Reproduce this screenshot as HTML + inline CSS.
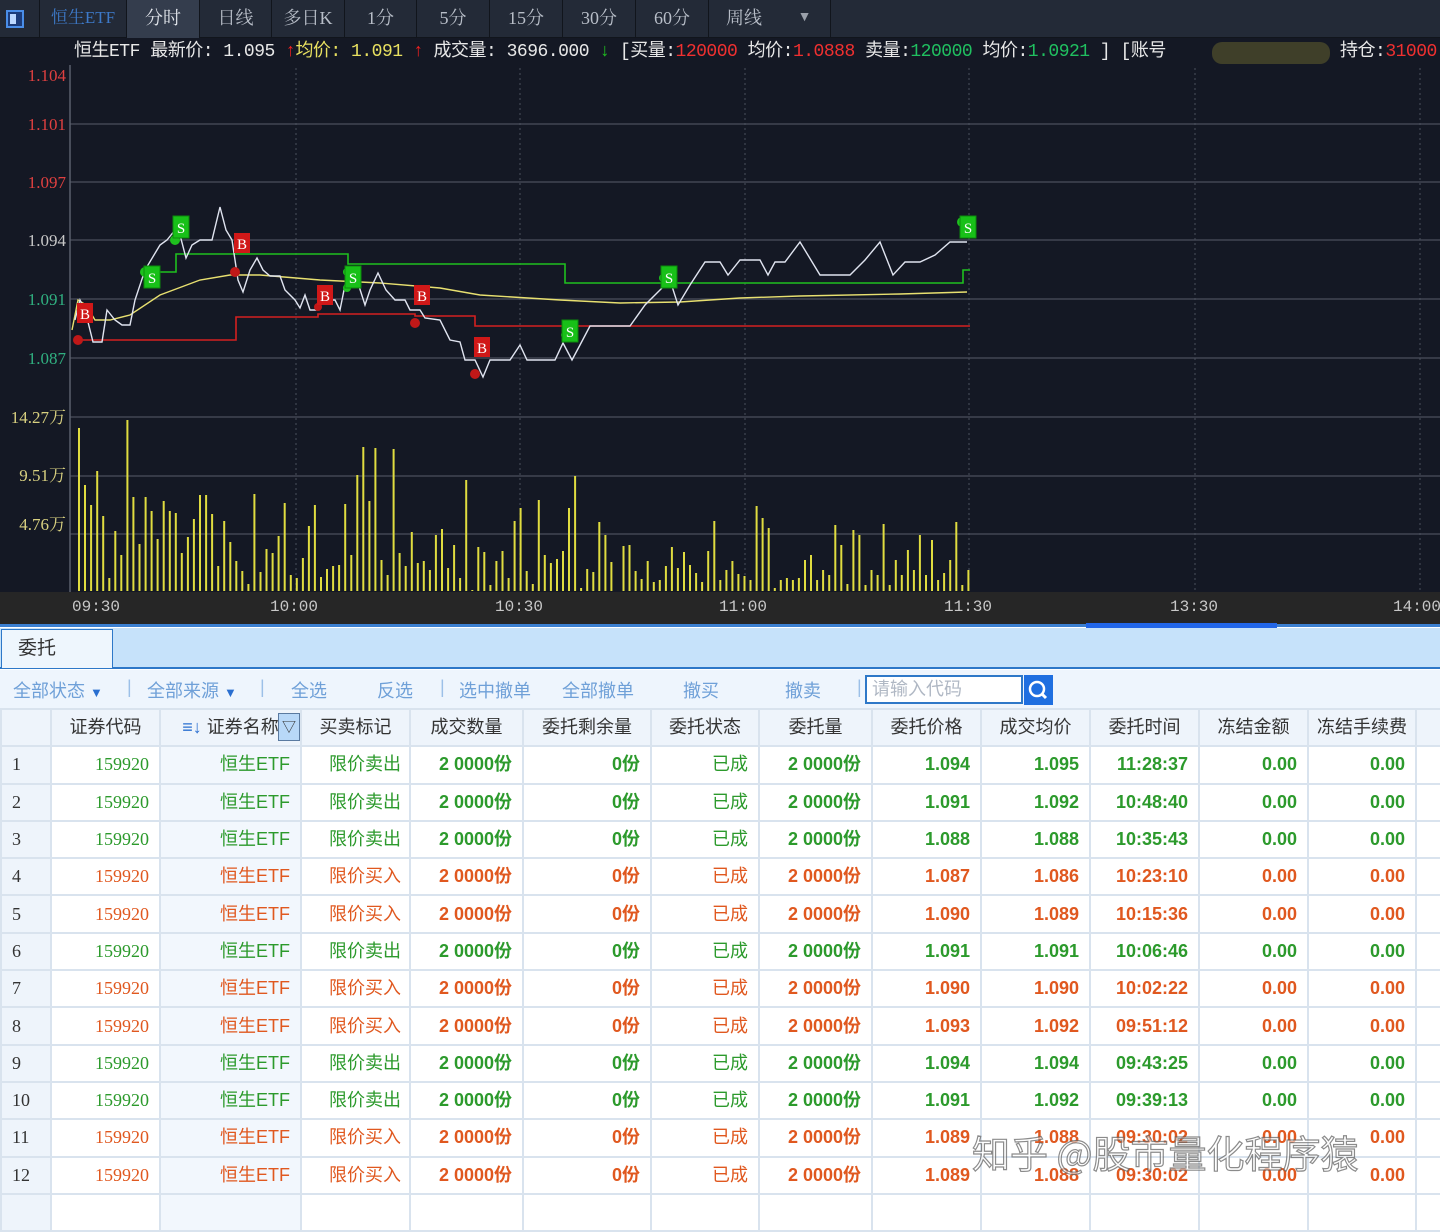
<!DOCTYPE html>
<html><head><meta charset="utf-8"><style>
*{margin:0;padding:0;box-sizing:border-box}
body{width:1440px;height:1209px;overflow:hidden;background:#fff;font-family:"Liberation Sans","Noto Sans CJK SC",sans-serif;position:relative}
.top{position:absolute;left:0;top:0;width:1440px;height:38px;background:#232a37;border-bottom:1px solid #11151c}
.tab{position:absolute;top:0;height:38px;line-height:36px;color:#b8bec8;font-size:18px;text-align:center;border-right:1px solid #11151c;font-family:"Liberation Serif","Noto Serif CJK SC",serif}
.info{position:absolute;left:0;top:38px;width:1440px;height:27px;background:#141824;font-family:"Liberation Mono","Noto Sans CJK SC",monospace;font-size:18px;line-height:28px;white-space:nowrap;color:#e8e8e8;letter-spacing:-0.5px}
.axis{position:absolute;left:0;top:592px;width:1440px;height:35px;background:#262626;border-bottom:3px solid #3b7fd0}
.axis span{position:absolute;top:6px;color:#c8c8c8;font-size:16px;font-family:"Liberation Mono",monospace}
.strip{position:absolute;left:0;top:628px;width:1440px;height:41px;background:#c6e2fa;border-bottom:2px solid #2e78c8}
.wt{position:absolute;left:1px;top:1px;width:112px;height:39px;background:#eef6fd;border:1px solid #2e78c8;border-bottom:none;font-size:19px;color:#333;padding-left:16px;line-height:38px}
.tb{position:absolute;left:0;top:670px;width:1440px;height:39px;background:#eef5fd;font-size:18px;color:#6fa0d8}
.tb span{position:absolute;top:7px}
table{position:absolute;left:0;top:708px;border-collapse:collapse;table-layout:fixed;width:1436px}
td,th{border:2px solid #d9e3ee;height:37.3px;padding-top:0;padding-bottom:0;line-height:33px;font-size:18px;text-align:right;padding-right:10px;white-space:nowrap;overflow:hidden}
th{background:#eef4fb;font-weight:normal;color:#333;text-align:center;padding:0}
tr.s td{color:#2c9a2c}tr.b td{color:#e0581f}
tr td.n{text-align:left;padding-left:10px;color:#333;background:#eef4fb;font-family:"Liberation Serif",serif}
td.bd{font-weight:bold}
td.c{background:#f2f7fd}
.wm{position:absolute;left:972px;top:1124px;font-size:38px;color:rgba(255,255,255,.55);-webkit-text-stroke:1.2px rgba(90,90,90,.7);font-family:"Noto Sans CJK SC",sans-serif;white-space:nowrap}
</style></head><body>
<div class="top">
<div class="tab" style="left:0;width:40px"><div style="position:absolute;left:6px;top:10px;width:18px;height:18px;border:2px solid #4a8ee8;background:#1c3c7a"><div style="position:absolute;left:2px;top:2px;width:6px;height:10px;background:#bcd8ff"></div></div></div>
<div class="tab" style="left:40px;width:87px;color:#3d79c8;font-size:17px">恒生ETF</div>
<div class="tab" style="left:127px;width:73px;background:#343d4d;color:#e0e4ea">分时</div>
<div class="tab" style="left:200px;width:72px">日线</div>
<div class="tab" style="left:272px;width:73px">多日K</div>
<div class="tab" style="left:345px;width:72px">1分</div>
<div class="tab" style="left:417px;width:73px">5分</div>
<div class="tab" style="left:490px;width:73px">15分</div>
<div class="tab" style="left:563px;width:73px">30分</div>
<div class="tab" style="left:636px;width:73px">60分</div>
<div class="tab" style="left:709px;width:70px;border:none">周线</div>
<div class="tab" style="left:779px;width:52px;font-size:14px;color:#9aa0aa">▼</div>
</div>
<div class="info">
<span style="position:absolute;left:74px">恒生ETF  最新价: 1.095 <b style="color:#f02020">↑</b><span style="color:#e8e060">均价: 1.091</span> <b style="color:#f02020">↑</b> 成交量: 3696.000 <b style="color:#20c020">↓</b>  [买量:<span style="color:#f03030">120000</span> 均价:<span style="color:#f03030">1.0888</span> 卖量:<span style="color:#20c060">120000</span> 均价:<span style="color:#20c060">1.0921</span> ] [账号</span>
<span style="position:absolute;left:1212px;top:4px;width:118px;height:22px;background:#4a4a2a;border-radius:10px;opacity:.8"></span>
<span style="position:absolute;left:1340px">持仓:<span style="color:#f03030">31000</span></span>
</div>
<svg style="position:absolute;left:0;top:65px" width="1440" height="527" viewBox="0 65 1440 527">
<rect x="0" y="65" width="1440" height="527" fill="#141824"/>
<g stroke="#4a4f5c" stroke-width="1.3">
<line x1="70" x2="1440" y1="124" y2="124"/><line x1="70" x2="1440" y1="182" y2="182"/><line x1="70" x2="1440" y1="240" y2="240"/><line x1="70" x2="1440" y1="299" y2="299"/><line x1="70" x2="1440" y1="358" y2="358"/><line x1="70" x2="1440" y1="417" y2="417"/><line x1="70" x2="1440" y1="476" y2="476"/><line x1="70" x2="1440" y1="534" y2="534"/>
</g>
<g stroke="#4a4f5c" stroke-width="1" stroke-dasharray="2,3">
<line x1="296" x2="296" y1="68" y2="592"/><line x1="520" x2="520" y1="68" y2="592"/><line x1="745" x2="745" y1="68" y2="592"/><line x1="969" x2="969" y1="68" y2="592"/><line x1="1195" x2="1195" y1="68" y2="592"/><line x1="1420" x2="1420" y1="68" y2="592"/>
</g>
<line x1="70" x2="70" y1="65" y2="592" stroke="#5a5f6c" stroke-width="1.5"/>
<g font-family="Liberation Serif,Noto Serif CJK SC,serif" font-size="17" text-anchor="end">
<text x="66" y="81" fill="#e04040">1.104</text><text x="66" y="130" fill="#e04040">1.101</text><text x="66" y="188" fill="#e04040">1.097</text><text x="66" y="246" fill="#c8c8c8">1.094</text><text x="66" y="305" fill="#30b080">1.091</text><text x="66" y="364" fill="#30b080">1.087</text>
<text x="66" y="423" fill="#d8d080">14.27万</text><text x="66" y="481" fill="#d8d080">9.51万</text><text x="66" y="530" fill="#d8d080">4.76万</text>
</g>
<g id="bars" fill="#e0dc40"></g>
<polyline fill="none" stroke="#1ec01e" stroke-width="1.6" points="145,272 176,272 176,254 348,254 348,264 565,264 565,283 963,283 963,270 970,270"/>
<polyline fill="none" stroke="#d42020" stroke-width="1.6" points="78,340 236,340 236,317 318,317 318,314 415,314 415,316 475,316 475,326 970,326"/>
<polyline fill="none" stroke="#e8e070" stroke-width="1.4" points="72,330 78,300 86,305 95,320 110,320 130,315 160,295 200,280 230,275 260,275 320,280 380,283 440,288 480,295 560,300 620,303 680,302 740,298 800,296 900,294 967,292"/>
<polyline fill="none" stroke="#e0e4f0" stroke-width="1.4" points="75,320 80,300 85,310 93,342 102,342 107,310 115,320 122,325 130,325 135,300 145,270 160,245 167,240 175,230 180,235 186,258 192,245 200,240 212,240 220,207 226,230 232,240 238,280 243,292 250,270 257,258 263,270 270,276 280,276 285,290 295,300 300,308 305,295 310,310 316,310 322,300 335,300 340,310 345,285 350,270 357,280 365,305 370,290 378,273 386,290 395,300 405,300 410,310 420,310 425,318 440,320 450,340 460,342 465,360 475,360 483,377 490,360 510,360 520,345 527,360 555,360 563,343 572,360 580,345 590,326 630,326 645,305 660,290 670,280 678,305 690,285 705,262 720,262 728,275 740,260 760,260 768,275 775,262 785,262 800,242 820,275 850,275 865,260 880,242 893,275 905,262 920,262 935,255 950,242 967,242"/>
<g fill="#c01818"><circle cx="78" cy="340" r="5"/><circle cx="235" cy="272" r="5"/><circle cx="318" cy="307" r="4"/><circle cx="415" cy="323" r="5"/><circle cx="475" cy="374" r="5"/></g>
<g fill="#1ec01e"><circle cx="175" cy="240" r="5"/><circle cx="145" cy="272" r="5"/><circle cx="347" cy="272" r="4"/><circle cx="347" cy="288" r="4"/><circle cx="565" cy="335" r="4"/><circle cx="663" cy="278" r="4"/><circle cx="962" cy="222" r="5"/></g>
<g font-family="Liberation Serif,serif" font-size="15" text-anchor="middle" fill="#fff">
<g fill="#d01818"><rect x="77" y="303" width="16" height="20"/><rect x="234" y="233" width="16" height="20"/><rect x="317" y="285" width="16" height="20"/><rect x="414" y="285" width="16" height="20"/><rect x="474" y="337" width="16" height="20"/></g>
<g fill="#18c018" stroke="#0c8a0c"><rect x="173" y="216" width="16" height="22"/><rect x="144" y="266" width="16" height="22"/><rect x="345" y="266" width="16" height="22"/><rect x="562" y="320" width="16" height="22"/><rect x="661" y="266" width="16" height="22"/><rect x="960" y="216" width="16" height="22"/></g>
<text x="85" y="319">B</text><text x="242" y="249">B</text><text x="325" y="301">B</text><text x="422" y="301">B</text><text x="482" y="353">B</text>
<text x="181" y="233">S</text><text x="152" y="283">S</text><text x="353" y="283">S</text><text x="570" y="337">S</text><text x="669" y="283">S</text><text x="968" y="233">S</text>
</g>
</svg>
<div class="axis">
<span style="left:72px">09:30</span><span style="left:270px">10:00</span><span style="left:495px">10:30</span><span style="left:719px">11:00</span><span style="left:944px">11:30</span><span style="left:1170px">13:30</span><span style="left:1393px">14:00</span>
<div style="position:absolute;left:1086px;top:31px;width:191px;height:6px;background:#2266e8"></div>
</div>
<div class="strip"><div class="wt">委托</div></div>
<div class="tb">
<span style="left:13px">全部状态 <small style="color:#2a6fd0;font-size:13px">▼</small></span>
<span style="left:127px;color:#9cc0e8">|</span>
<span style="left:147px">全部来源 <small style="color:#2a6fd0;font-size:13px">▼</small></span>
<span style="left:260px;color:#9cc0e8">|</span>
<span style="left:291px">全选</span><span style="left:377px">反选</span>
<span style="left:440px;color:#9cc0e8">|</span>
<span style="left:459px">选中撤单</span><span style="left:562px">全部撤单</span><span style="left:683px">撤买</span><span style="left:785px">撤卖</span>
<span style="left:857px;color:#9cc0e8">|</span>
<div style="position:absolute;left:865px;top:5px;width:158px;height:29px;border:2px solid #2e78c8;background:#fff;color:#b0b8c4;font-size:18px;padding-left:5px;line-height:25px">请输入代码</div>
<div style="position:absolute;left:1024px;top:5px;width:29px;height:30px;background:#1f6fe0"><svg width="29" height="30"><circle cx="13" cy="14" r="7" fill="none" stroke="#fff" stroke-width="2.5"/><line x1="18" y1="19" x2="22" y2="23" stroke="#fff" stroke-width="3"/></svg></div>
</div>
<table>
<colgroup><col style="width:50px"><col style="width:109px"><col style="width:141px"><col style="width:109px"><col style="width:113px"><col style="width:128px"><col style="width:108px"><col style="width:113px"><col style="width:109px"><col style="width:109px"><col style="width:109px"><col style="width:109px"><col style="width:108px"><col style="width:129px"></colgroup>
<tr><th></th><th>证券代码</th><th style="position:relative"><span style="color:#2a6fd0;font-weight:bold">≡↓</span> 证券名称<span style="position:absolute;right:0;top:3px;width:22px;height:28px;background:#b8d8f8;border:1px solid #5a7aa0;font-size:14px;line-height:26px">▽</span></th><th>买卖标记</th><th>成交数量</th><th>委托剩余量</th><th>委托状态</th><th>委托量</th><th>委托价格</th><th>成交均价</th><th>委托时间</th><th>冻结金额</th><th>冻结手续费</th><th style="border-right:none"></th></tr>
<tbody id="tb"></tbody>
</table>
<div class="wm">知乎 @股市量化程序猿</div>
<script>
var d=[["s","1.094","1.095","11:28:37"],["s","1.091","1.092","10:48:40"],["s","1.088","1.088","10:35:43"],["b","1.087","1.086","10:23:10"],["b","1.090","1.089","10:15:36"],["s","1.091","1.091","10:06:46"],["b","1.090","1.090","10:02:22"],["b","1.093","1.092","09:51:12"],["s","1.094","1.094","09:43:25"],["s","1.091","1.092","09:39:13"],["b","1.089","1.088","09:30:02"],["b","1.089","1.088","09:30:02"]];
var h="";d.forEach(function(r,i){h+='<tr class="'+r[0]+'"><td class="n">'+(i+1)+'</td><td style="font-family:Liberation Serif,serif">159920</td><td class="c">恒生ETF</td><td style="padding-right:8px">'+(r[0]=="s"?"限价卖出":"限价买入")+'</td><td class="bd">2 0000份</td><td class="bd">0份</td><td>已成</td><td class="bd">2 0000份</td><td class="bd">'+r[1]+'</td><td class="bd">'+r[2]+'</td><td class="bd">'+r[3]+'</td><td class="bd">0.00</td><td class="bd">0.00</td><td style="border-right:none"></td></tr>';});
h+='<tr><td class="n"></td><td></td><td class="c"></td><td></td><td></td><td></td><td></td><td></td><td></td><td></td><td></td><td></td><td></td><td style="border-right:none"></td></tr>';
document.getElementById("tb").innerHTML=h;
var tops=[428,485,505,471,516,578,531,555,420,497,544,497,511,539,501,511,513,553,537,519,495,495,514,566,521,542,561,571,584,494,572,549,553,536,503,575,578,558,526,505,577,569,566,565,504,555,475,447,501,448,560,575,449,553,566,532,563,561,570,535,529,568,545,578,480,590,547,552,585,561,551,578,521,508,571,584,500,555,563,559,551,508,476,588,569,572,522,535,562,592,546,545,571,579,561,582,580,566,547,568,552,565,573,582,551,521,580,570,561,574,576,580,506,518,528,588,580,578,580,578,560,555,580,570,575,525,545,584,530,535,585,570,575,524,585,560,575,550,570,535,575,540,580,573,560,522,585,570];
var s="";for(var i=0;i<tops.length;i++){var x=78+i*6.05;if(x>968)break;s+='<rect x="'+x.toFixed(1)+'" y="'+tops[i]+'" width="2" height="'+(591-tops[i])+'"/>';}
document.getElementById("bars").innerHTML=s;
</script>
</body></html>
